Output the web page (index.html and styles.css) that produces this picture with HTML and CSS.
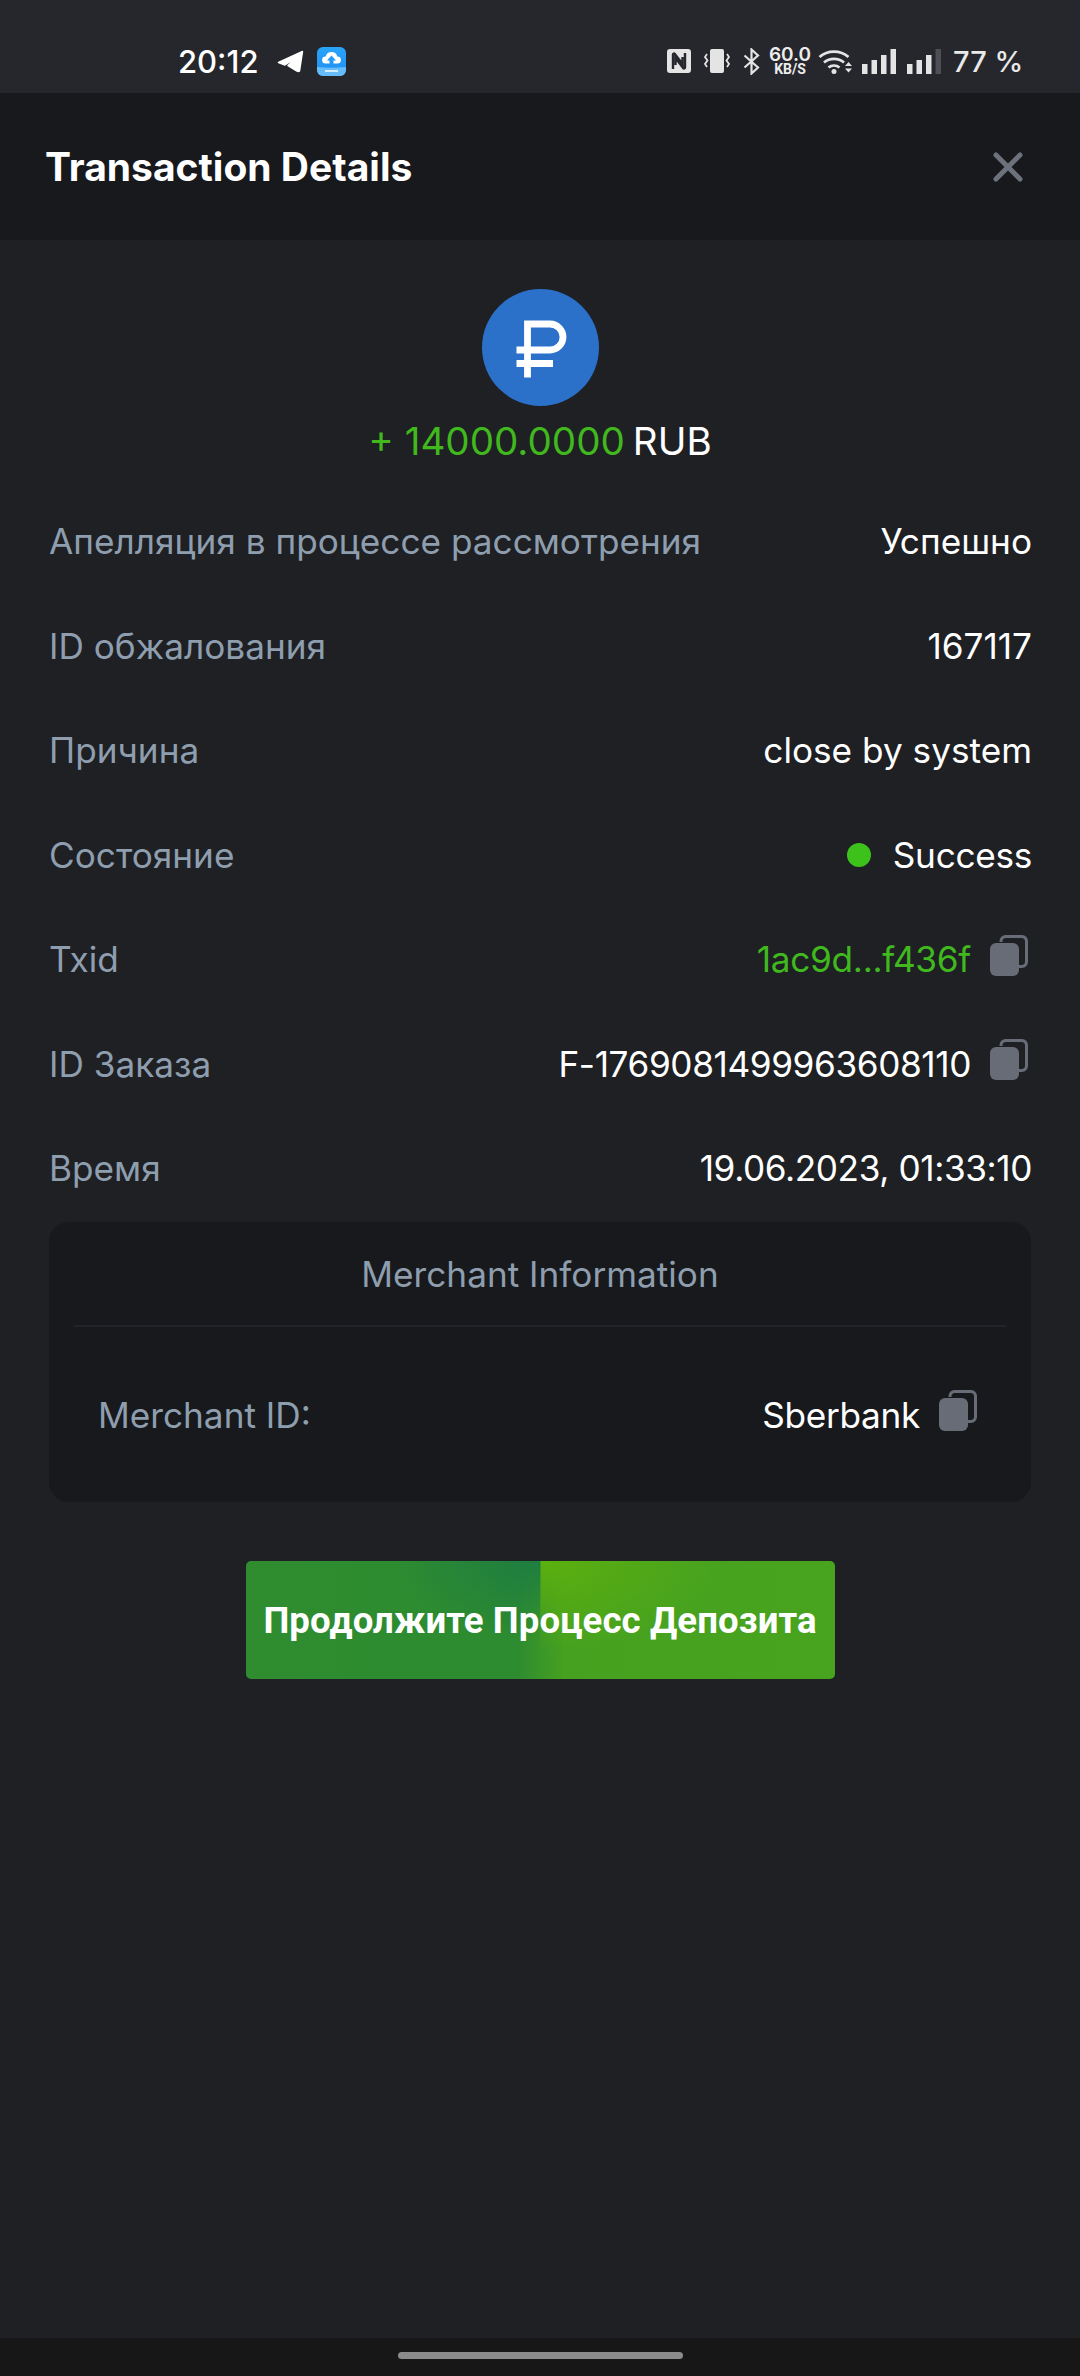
FILE: index.html
```html
<!DOCTYPE html>
<html lang="ru">
<head>
<meta charset="utf-8">
<title>Transaction Details</title>
<link rel="stylesheet" href="styles.css">
</head>
<body>
<div class="phone">
  <div class="statusbar">
    <div class="status-left">
      <span class="clock">20:12</span>
      <svg class="tg" width="27" height="23" viewBox="0 0 27 23"><path d="M1.500 12.500 L25.500 1.500 L22.500 21 Q21.500 22 20 21 L11 15.500 L20 7 L8 15 Z" fill="#fff" stroke="#fff" stroke-width="1.500" stroke-linejoin="round"/></svg>
      <svg class="cloud" width="29" height="29" viewBox="0 0 29 29"><defs><linearGradient id="cg" x1="0" y1="0" x2="0" y2="1"><stop offset="0" stop-color="#2aa4fb"/><stop offset="1" stop-color="#1f8df0"/></linearGradient></defs><rect width="29" height="29" rx="6" fill="url(#cg)"/><path d="M0 20q14.500 1.500 29 0v3a6 6 0 0 1-6 6H6a6 6 0 0 1-6-6z" fill="#66bdfa"/><path d="M8.500 16.500a3.500 3.500 0 0 1 .2-7 6 6 0 0 1 11.600 0 3.500 3.500 0 0 1 .2 7h-4v-3h2.500l-4.500-5-4.500 5h2.500v3z" fill="#fff"/><rect x="8" y="23" width="13" height="2" fill="#d5eefe"/></svg>
    </div>
    <div class="status-right">
      <svg class="s-nfc" width="24" height="24" viewBox="0 0 24 24"><rect width="24" height="24" rx="3" fill="#e4e4e4"/><path d="M6 20V5.500a1 1 0 0 1 1.800-.6L15.500 15V8M18 4v14.500a1 1 0 0 1-1.800.6L8.500 9v7" fill="none" stroke="#25272d" stroke-width="2.400"/></svg>
      <svg class="s-vib" width="26" height="24" viewBox="0 0 26 24"><rect x="6" y="0" width="14" height="24" rx="2" fill="#e4e4e4"/><path d="M3 5l-2 3 2.500 3.500-2.500 3.500 2 3M23 5l2 3-2.500 3.500 2.500 3.500-2 3" fill="none" stroke="#e4e4e4" stroke-width="1.800"/></svg>
      <svg class="s-bt" width="17" height="27" viewBox="0 0 17 27"><path d="M1.500 7.500L15 19.500 8.500 25.500V1.500L15 7.500 1.500 19.500" fill="none" stroke="#e4e4e4" stroke-width="2.200"/></svg>
      <span class="speed"><b>60.0</b><i>KB/S</i></span>
      <svg class="s-wifi" width="35" height="26" viewBox="0 0 35 26"><path d="M1.500 9a22 22 0 0 1 29 0M6 14.500a15.500 15.500 0 0 1 20 0M10.500 19.500a9 9 0 0 1 11 0" fill="none" stroke="#e4e4e4" stroke-width="2.800"/><circle cx="16" cy="23.500" r="2.500" fill="#e4e4e4"/><path d="M27 18l3.500-4 3.500 4zM27 20.500h7l-3.500 4z" fill="#e4e4e4"/></svg>
      <svg class="s-sig" width="34" height="25" viewBox="0 0 34 25"><rect y="15" width="5.500" height="10" fill="#e4e4e4"/><rect x="9.500" y="11" width="5.500" height="14" fill="#e4e4e4"/><rect x="19" y="6" width="5.500" height="19" fill="#e4e4e4"/><rect x="28.500" y="0" width="5.500" height="25" fill="#e4e4e4"/></svg>
      <svg class="s-sig2" width="34" height="25" viewBox="0 0 34 25"><rect y="15" width="5.500" height="10" fill="#e4e4e4"/><rect x="9.500" y="11" width="5.500" height="14" fill="#e4e4e4"/><rect x="19" y="6" width="5.500" height="19" fill="#e4e4e4"/><rect x="28.500" y="0" width="5.500" height="25" fill="#4d4f54"/></svg>
      <span class="battery">77 %</span>
    </div>
  </div>

  <header class="header">
    <h1 class="title">Transaction Details</h1>
    <svg class="close" width="32" height="32" viewBox="0 0 32 32"><path d="M4 4L28 28M28 4L4 28" stroke="#6c727c" stroke-width="5" stroke-linecap="round"/></svg>
  </header>

  <main class="content">
    <div class="coin">
      <svg width="117" height="117" viewBox="0 0 117 117"><circle cx="58.500" cy="58.500" r="58.500" fill="#2b71c9"/><path d="M34.500 61H68a13 13 0 0 0 0-26H45.500V88.500M34.500 74.500H71" fill="none" stroke="#fff" stroke-width="6.800"/></svg>
    </div>
    <div class="amount"><span class="plus">+ 14000.0000</span> <span class="cur">RUB</span></div>

    <div class="rows">
      <div class="row"><span class="label">Апелляция в процессе рассмотрения</span><span class="value">Успешно</span></div>
      <div class="row"><span class="label">ID обжалования</span><span class="value">167117</span></div>
      <div class="row"><span class="label">Причина</span><span class="value">close by system</span></div>
      <div class="row"><span class="label">Состояние</span><span class="value status tight"><i class="dot"></i>Success</span></div>
      <div class="row"><span class="label">Txid</span><span class="value with-copy tight"><span class="green">1ac9d...f436f</span><svg class="copy" width="38" height="41" viewBox="0 0 38 41"><path d="M11 7V6a4.500 4.500 0 0 1 4.500-4.500H32A4.500 4.500 0 0 1 36.500 6V27a4.500 4.500 0 0 1-4.500 4.500h-3" fill="none" stroke="#676c76" stroke-width="3"/><rect y="8" width="29" height="33" rx="6" fill="#676c76"/></svg></span></div>
      <div class="row"><span class="label">ID Заказа</span><span class="value with-copy num-tight">F-1769081499963608110<svg class="copy" width="38" height="41" viewBox="0 0 38 41"><path d="M11 7V6a4.500 4.500 0 0 1 4.500-4.500H32A4.500 4.500 0 0 1 36.500 6V27a4.500 4.500 0 0 1-4.500 4.500h-3" fill="none" stroke="#676c76" stroke-width="3"/><rect y="8" width="29" height="33" rx="6" fill="#676c76"/></svg></span></div>
      <div class="row"><span class="label">Время</span><span class="value num-tight">19.06.2023, 01:33:10</span></div>
    </div>

    <section class="card">
      <div class="card-title">Merchant Information</div>
      <div class="card-row"><span class="label">Merchant ID:</span><span class="value with-copy tight">Sberbank<svg class="copy" width="38" height="41" viewBox="0 0 38 41"><path d="M11 7V6a4.500 4.500 0 0 1 4.500-4.500H32A4.500 4.500 0 0 1 36.500 6V27a4.500 4.500 0 0 1-4.500 4.500h-3" fill="none" stroke="#676c76" stroke-width="3"/><rect y="8" width="29" height="33" rx="6" fill="#676c76"/></svg></span></div>
    </section>

    <div class="cta-wrap"><button class="cta">Продолжите Процесс Депозита</button></div>
  </main>

  <div class="navbar"><span class="home"></span></div>
</div>
</body>
</html>
```
FILE: styles.css
```css
* { box-sizing: border-box; }
html, body { margin: 0; padding: 0; background: #1e2024; }
body { font-family: "Inter", "Noto Sans", sans-serif; }
.phone { width: 1080px; height: 2376px; display: flex; flex-direction: column; overflow: hidden; background: #1e2024; }

.statusbar { height: 93px; background: #25272c; display: flex; justify-content: space-between; align-items: center; padding: 29px 62px 0 178px; }
.status-left, .status-right { display: flex; align-items: center; }
.clock { font: 500 31px "Inter", sans-serif; color: #fff; width: 80px; }
.tg { margin-left: 19px; }
.cloud { margin-left: 13px; }
.s-nfc { margin-right: 13px; }
.s-vib { margin-right: 13px; }
.s-bt { margin-right: 10px; }
.speed { display: flex; flex-direction: column; align-items: center; width: 40px; margin-right: 8px; color: #ececec; }
.speed b { font: 600 19px/16px "Inter", sans-serif; }
.speed i { font: 700 14px/12px "Roboto", sans-serif; }
.s-wifi { margin-right: 9px; }
.s-sig { margin-right: 11px; }
.s-sig2 { margin-right: 12px; }
.battery { font: 500 29px "Inter", sans-serif; color: #e9e9e9; width: 65px; white-space: nowrap; }

.header { height: 147px; background: #17191d; display: flex; justify-content: space-between; align-items: center; padding: 0 56px 0 45px; }
.title { margin: 0; font: 700 39px "Inter", sans-serif; color: #fff; }

.content { flex: 1; padding: 49px 48px 0 49px; display: flex; flex-direction: column; }
.coin { height: 117px; display: flex; justify-content: center; padding-right: 1px; }
.coin svg { display: block; }
.amount { height: 68px; margin-bottom: 15px; display: flex; justify-content: center; align-items: center; gap: 8px; font-size: 38.600px; padding: 2px 1px 0 0; }
.plus { color: #40b81e; }
.cur { color: #fff; }

.rows { display: flex; flex-direction: column; }
.row { height: 104.500px; display: flex; justify-content: space-between; align-items: center; font-size: 35.200px; }
.label { color: #8e9eae; }
.value { color: #fff; display: flex; align-items: center; }
.num-tight { letter-spacing: -0.400px; }
.tight { letter-spacing: -0.300px; }
.green { color: #40b81e; }
.dot { width: 24px; height: 24px; border-radius: 50%; background: #3dc21c; margin-right: 22px; }
.with-copy .copy { margin: -8px 4px 0 19px; }

.card { height: 280px; margin: 1.500px 1px 0 0; background: #17191d; border-radius: 20px; padding: 0 25px; display: flex; flex-direction: column; }
.card-title { height: 105px; border-bottom: 2px solid #222429; display: flex; justify-content: center; align-items: center; font-size: 35.200px; color: #8e9eae; }
.card-row { flex: 1; display: flex; justify-content: space-between; align-items: center; font-size: 35.200px; padding: 0 25px 0 24px; }

.cta-wrap { display: flex; justify-content: center; margin-top: 59px; padding-right: 1px; }
.cta { width: 589px; height: 118px; border: 0; border-radius: 5px; padding: 0; color: #fff; font: 700 36.600px "Roboto", sans-serif; letter-spacing: 0.100px; white-space: nowrap;
  background:
    radial-gradient(ellipse 150px 80px at 100% 0, #1d7d40, rgba(29,125,64,0)) left top / 50% 100% no-repeat,
    radial-gradient(ellipse 180px 90px at 0 0, #5cb00e, rgba(92,176,14,0)) right top / 50% 100% no-repeat,
    linear-gradient(90deg, #2f8d30 0, #2d8b30 46%, #46a120 54%, #48a41e 100%);
}

.navbar { height: 38px; background: #171717; display: flex; justify-content: center; padding-top: 14px; }
.home { width: 285px; height: 7px; border-radius: 4px; background: #8b8b8b; }
```
